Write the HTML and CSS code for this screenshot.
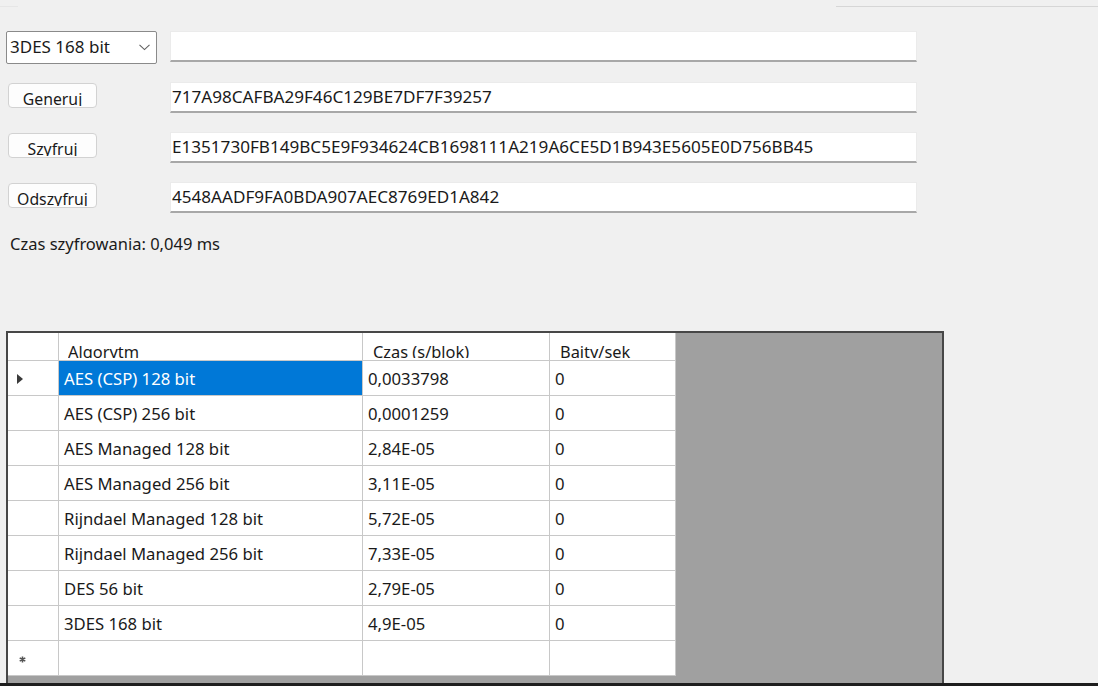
FILE: index.html
```html
<!DOCTYPE html>
<html>
<head>
<meta charset="utf-8">
<link rel="stylesheet" href="styles.css">
</head>
<body>
<div class="app">
  <div class="topstrip"><div class="seg-left"></div><div class="seg-right"></div></div>
  <div class="form">
    <div class="row row-first">
      <div class="combo"><span class="combo-text">3DES 168 bit</span>
        <svg class="chev" width="11" height="7" viewBox="0 0 11 7"><path d="M0.5 0.8 L5.5 5.6 L10.5 0.8" fill="none" stroke="#606060" stroke-width="1.1"/></svg>
      </div>
      <div class="tbox"></div>
    </div>
    <div class="row">
      <div class="btn-cell"><div class="btn"><span class="btn-label">Generuj</span></div></div>
      <div class="tbox">717A98CAFBA29F46C129BE7DF7F39257</div>
    </div>
    <div class="row">
      <div class="btn-cell"><div class="btn"><span class="btn-label">Szyfruj</span></div></div>
      <div class="tbox">E1351730FB149BC5E9F934624CB1698111A219A6CE5D1B943E5605E0D756BB45</div>
    </div>
    <div class="row">
      <div class="btn-cell"><div class="btn"><span class="btn-label">Odszyfruj</span></div></div>
      <div class="tbox">4548AADF9FA0BDA907AEC8769ED1A842</div>
    </div>
    <div class="status">Czas szyfrowania: 0,049 ms</div>
  </div>
  <div class="grid">
    <div class="grow ghead">
      <div class="c c0"></div>
      <div class="c c1"><span class="hlabel">Algorytm</span></div>
      <div class="c c2"><span class="hlabel">Czas (s/blok)</span></div>
      <div class="c c3"><span class="hlabel">Bajty/sek</span></div>
    </div>
    <div class="grow">
      <div class="c c0"><svg class="arrow" width="6" height="10" viewBox="0 0 6 10"><path d="M0 0 L6 5 L0 10 Z" fill="#3a3a3a"/></svg></div>
      <div class="c c1 sel">AES (CSP) 128 bit</div>
      <div class="c c2">0,0033798</div>
      <div class="c c3">0</div>
    </div>
    <div class="grow">
      <div class="c c0"></div><div class="c c1">AES (CSP) 256 bit</div><div class="c c2">0,0001259</div><div class="c c3">0</div>
    </div>
    <div class="grow">
      <div class="c c0"></div><div class="c c1">AES Managed 128 bit</div><div class="c c2">2,84E-05</div><div class="c c3">0</div>
    </div>
    <div class="grow">
      <div class="c c0"></div><div class="c c1">AES Managed 256 bit</div><div class="c c2">3,11E-05</div><div class="c c3">0</div>
    </div>
    <div class="grow">
      <div class="c c0"></div><div class="c c1">Rijndael Managed 128 bit</div><div class="c c2">5,72E-05</div><div class="c c3">0</div>
    </div>
    <div class="grow">
      <div class="c c0"></div><div class="c c1">Rijndael Managed 256 bit</div><div class="c c2">7,33E-05</div><div class="c c3">0</div>
    </div>
    <div class="grow">
      <div class="c c0"></div><div class="c c1">DES 56 bit</div><div class="c c2">2,79E-05</div><div class="c c3">0</div>
    </div>
    <div class="grow">
      <div class="c c0"></div><div class="c c1">3DES 168 bit</div><div class="c c2">4,9E-05</div><div class="c c3">0</div>
    </div>
    <div class="grow">
      <div class="c c0"><svg class="star" width="7" height="7" viewBox="0 0 8 8"><path d="M4 0.5 V7.5 M0.8 2.2 L7.2 5.8 M0.8 5.8 L7.2 2.2" stroke="#555" stroke-width="1.8"/></svg></div>
      <div class="c c1"></div><div class="c c2"></div><div class="c c3"></div>
    </div>
  </div>
  <div class="bottombar"></div>
</div>
</body>
</html>
```

FILE: styles.css
```css
* { box-sizing: border-box; }
html, body { margin: 0; padding: 0; }
body {
  background: #f0f0f0;
  font-family: "Noto Sans", "Open Sans", sans-serif;
  font-size: 16.5px;
  color: #1a1a1a;
  overflow: hidden;
}
.app {
  width: 1098px;
  height: 686px;
  display: flex;
  flex-direction: column;
  overflow: hidden;
}
.topstrip {
  height: 7px;
  display: flex;
  justify-content: space-between;
  align-items: flex-end;
}
.seg-left { width: 18px; height: 1px; background: #e6e6e6; }
.seg-right { width: 262px; height: 1px; background: #d6d6d6; }
.form {
  display: flex;
  flex-direction: column;
  padding-top: 24px;
}
.row {
  display: flex;
  align-items: flex-start;
  height: 31px;
  margin-bottom: 19px;
}
.row-first { height: 32px; }
.combo {
  margin-left: 6px;
  width: 151px;
  height: 33px;
  background: #fff;
  border: 1px solid #8a8a8a;
  border-radius: 2px;
  display: flex;
  align-items: center;
  justify-content: space-between;
  padding: 0 6px 1px 3px;
  margin-right: 13px;
  font-size: 17px;
}
.combo-text { white-space: nowrap; }
.chev { margin-top: 2px; }
.btn-cell {
  width: 170px;
  padding-left: 8px;
  padding-top: 1px;
}
.btn {
  width: 89px;
  height: 25px;
  background: #fdfdfd;
  border: 1px solid #d2d2d2;
  border-radius: 4px;
  display: flex;
  justify-content: center;
  padding-top: 1px;
}
.btn-label {
  display: block;
  height: 21px;
  font-size: 15.8px;
  line-height: 28px;
  overflow: hidden;
  white-space: nowrap;
}
.tbox {
  width: 747px;
  height: 31px;
  background: #fff;
  border: 1px solid #ebebeb;
  border-bottom: 2px solid #a8a8a8;
  padding-left: 1px;
  line-height: 28px;
  white-space: nowrap;
  overflow: hidden;
  font-size: 17.1px;
}
.status {
  margin-top: 2px;
  padding-left: 10px;
  height: 20px;
  line-height: 20px;
}
.grid {
  margin-top: 77px;
  margin-left: 6px;
  width: 938px;
  height: 355px;
  background: #a0a0a0;
  border: 2px solid #474747;
  border-bottom: none;
  display: flex;
  flex-direction: column;
}
.grow {
  display: flex;
  width: 668px;
  height: 35px;
  flex: none;
  background: #fff;
  font-size: 16.7px;
}
.ghead { height: 28px; font-size: 16.4px; }
.c {
  height: 100%;
  border-right: 1px solid #c8c8c8;
  border-bottom: 1px solid #c8c8c8;
  padding-left: 5px;
  padding-top: 1px;
  line-height: 34px;
  white-space: nowrap;
  overflow: hidden;
}
.c0 { width: 51px; padding-left: 0; padding-top: 0; display: flex; align-items: center; }
.c1 { width: 304px; }
.c2 { width: 187px; }
.c3 { width: 126px; }
.ghead .c { line-height: 20px; padding-left: 9px; padding-top: 0; }
.ghead .c2, .ghead .c3 { padding-left: 10px; }
.hlabel {
  display: block;
  margin-top: 5px;
  height: 20px;
  overflow: hidden;
  line-height: 27px;
}
.sel { background: #0078d7; color: #fff; }
.arrow { margin-left: 9px; margin-top: 2px; }
.star { margin-left: 11px; margin-top: 3px; }
.bottombar {
  flex: none;
  height: 3px;
  background: #1e1e1e;
}
```
